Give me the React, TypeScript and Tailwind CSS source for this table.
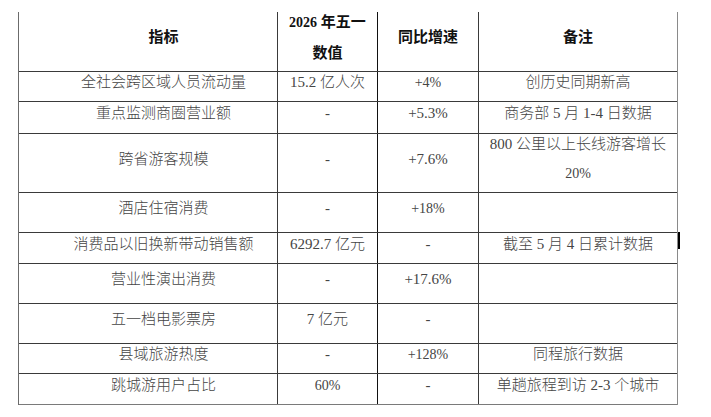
const font = { fontFamily: '"Liberation Serif", "Noto Sans CJK SC", serif' };

type Row = {
  name: string;
  value: React.ReactNode;
  growth: React.ReactNode;
  note: React.ReactNode;
  h: string;
};

const P = ({ children }: { children: React.ReactNode }) => (
  <span className="text-[14px]">{children}</span>
);

const rows: Row[] = [
  { name: '全社会跨区域人员流动量', value: '15.2 亿人次', growth: <P>+4%</P>, note: '创历史同期新高', h: 'h-[30px]' },
  { name: '重点监测商圈营业额', value: '-', growth: '+5.3%', note: '商务部 5 月 1-4 日数据', h: 'h-[32px]' },
  {
    name: '跨省游客规模',
    value: '-',
    growth: '+7.6%',
    note: (
      <span className="flex flex-col items-center leading-[30px]">
        <span>800 公里以上长线游客增长</span>
        <P>20%</P>
      </span>
    ),
    h: 'h-[59px]',
  },
  { name: '酒店住宿消费', value: '-', growth: <P>+18%</P>, note: '', h: 'h-[40px]' },
  { name: '消费品以旧换新带动销售额', value: '6292.7 亿元', growth: '-', note: '截至 5 月 4 日累计数据', h: 'h-[31px]' },
  { name: '营业性演出消费', value: '-', growth: '+17.6%', note: '', h: 'h-[40px]' },
  { name: '五一档电影票房', value: '7 亿元', growth: '-', note: '', h: 'h-[40px]' },
  { name: '县域旅游热度', value: '-', growth: <P>+128%</P>, note: '同程旅行数据', h: 'h-[30px]' },
  { name: '跳城游用户占比', value: <P>60%</P>, growth: '-', note: '单趟旅程到访 2-3 个城市', h: 'h-[31px]' },
];

const Cell = ({ w, children, extra = '', last = false }: { w: string; children: React.ReactNode; extra?: string; last?: boolean }) => (
  <div
    className={`${w} ${last ? '' : 'border-r border-[#3a3a3a]'} flex items-center justify-center pb-[8px] ${extra}`}
  >
    {children}
  </div>
);

export default function App() {
  return (
    <div className="w-[711px] h-[417px] bg-white pl-[18px] pt-[12px]" style={font}>
      <div className="relative w-[660px] border-l border-l-[#6b6b6b] border-r border-r-[#8a8a8a] text-[15px] text-[#454545] font-light">
        <div className="flex h-[60px] border-b border-[#3a3a3a] text-[#111] font-bold">
          <Cell w="w-[259px]" extra="pl-[31px]">指标</Cell>
          <Cell w="w-[100px]" extra="border-r-[#111]">
            <span className="flex flex-col items-center leading-[30px]">
              <span><span className="text-[14px]">2026</span> 年五一</span>
              <span>数值</span>
            </span>
          </Cell>
          <Cell w="w-[101px]">同比增速</Cell>
          <Cell w="w-[198px]" last>备注</Cell>
        </div>
        {rows.map((r, i) => (
          <div
            key={r.name}
            className={`flex ${r.h} border-b ${i === rows.length - 1 ? 'border-[#7a7a7a]' : 'border-[#3a3a3a]'}`}
          >
            <Cell w="w-[259px]" extra="pl-[31px]">{r.name}</Cell>
            <Cell w="w-[100px]" extra="border-r-[#111]">{r.value}</Cell>
            <Cell w="w-[101px]">{r.growth}</Cell>
            <Cell w="w-[198px]" last>{r.note}</Cell>
          </div>
        ))}
        <div className="absolute right-[-3px] top-[220px] w-[2px] h-[17px] bg-black" />
      </div>
    </div>
  );
}
